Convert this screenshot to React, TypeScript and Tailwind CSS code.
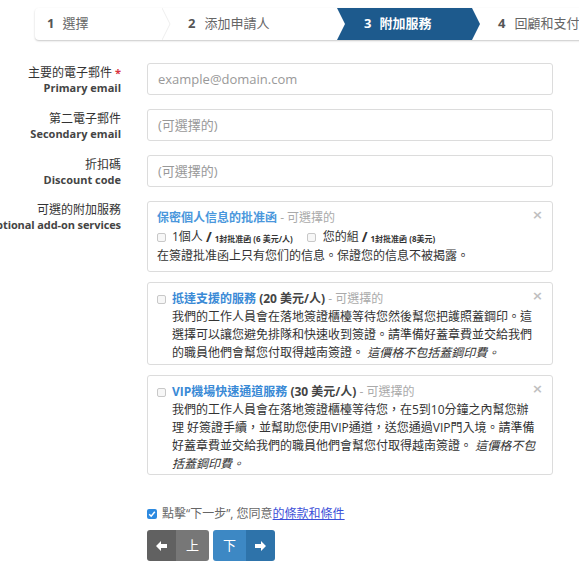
import React from "react";

function Check({ className = "" }: { className?: string }) {
  return (
    <span
      className={
        "inline-block w-[9px] h-[9px] border border-[#c8c8c8] rounded-[2px] bg-[#f7f7f7] shrink-0 " +
        className
      }
    />
  );
}

function Arrow({ dir }: { dir: "left" | "right" }) {
  return (
    <svg width="11" height="10" viewBox="0 0 11 10">
      {dir === "left" ? (
        <polygon points="0,5 5,0 5,3 11,3 11,7 5,7 5,10" fill="#fff" />
      ) : (
        <polygon points="11,5 6,0 6,3 0,3 0,7 6,7 6,10" fill="#fff" />
      )}
    </svg>
  );
}

function Close() {
  return (
    <span className="absolute top-[6px] right-[9px] text-[13px] leading-[14px] font-bold text-[#c0c0c0] font-['DejaVu_Sans',sans-serif]">
      ×
    </span>
  );
}

function Label({ zh, en, req }: { zh: string; en: string; req?: boolean }) {
  return (
    <div className="w-[121px] shrink-0 flex flex-col items-end leading-[15px] pt-[2px]">
      <div className="whitespace-nowrap text-[12px] text-[#333]">
        {zh}
        {req && <span className="text-[#d9333f] font-bold ml-[3px] text-[11px] align-top">*</span>}
      </div>
      <div className="whitespace-nowrap text-[11px] font-bold text-[#444]">{en}</div>
    </div>
  );
}

function Field({ placeholder }: { placeholder: string }) {
  return (
    <input
      readOnly
      placeholder={placeholder}
      className="ml-[26px] w-[406px] h-[32px] border border-[#dcdcdc] rounded-[3px] px-[10px] text-[13px] text-[#333] placeholder:text-[#999] outline-none bg-white"
    />
  );
}

export default function App() {
  return (
    <div className="w-[579px] h-[568px] overflow-hidden bg-white relative text-[#333] font-['Open_Sans','Noto_Sans_CJK_TC',sans-serif]">
      {/* Steps */}
      <div className="pt-[8px] pl-[35px]">
        <div className="h-[32px] w-[560px] flex items-stretch rounded-l-[4px] bg-white shadow-[0_1px_2px_rgba(0,0,0,0.22)] text-[13px]">
          <div className="w-[127px] flex items-center pl-[12px]">
            <span className="font-bold text-[#555]">1</span>
            <span className="ml-[8px] text-[#666]">選擇</span>
          </div>
          <svg width="10" height="32" viewBox="0 0 10 32" className="shrink-0">
            <polyline points="0,0 8,16 0,32" fill="none" stroke="#eeeeee" strokeWidth="1" />
          </svg>
          <div className="w-[165px] flex items-center pl-[16px]">
            <span className="font-bold text-[#555]">2</span>
            <span className="ml-[9px] text-[#666]">添加申請人</span>
          </div>
          <div className="relative w-[143px] flex items-center pl-[27px]">
            <svg width="143" height="32" viewBox="0 0 143 32" className="absolute inset-0">
              <polygon points="0,0 135,0 143,16 135,32 0,32 8,16" fill="#1d5a8d" />
            </svg>
            <span className="relative font-bold text-white">3</span>
            <span className="relative ml-[8px] font-bold text-white">附加服務</span>
          </div>
          <div className="flex items-center pl-[18px]">
            <span className="font-bold text-[#555]">4</span>
            <span className="ml-[9px] text-[#666] whitespace-nowrap">回顧和支付</span>
          </div>
        </div>
      </div>

      {/* Form */}
      <div className="mt-[23px] flex flex-col gap-[14px]">
        <div className="flex">
          <Label zh="主要的電子郵件" en="Primary email" req />
          <Field placeholder="example@domain.com" />
        </div>
        <div className="flex">
          <Label zh="第二電子郵件" en="Secondary email" />
          <Field placeholder="(可選擇的)" />
        </div>
        <div className="flex">
          <Label zh="折扣碼" en="Discount code" />
          <Field placeholder="(可選擇的)" />
        </div>
        <div className="flex">
          <div className="w-[121px] shrink-0 flex flex-col items-end leading-[15px] pt-[1px]">
            <div className="whitespace-nowrap text-[12px] text-[#333]">可選的附加服務</div>
            <div className="whitespace-nowrap text-[11px] font-bold text-[#444] tracking-[-0.1px]">Optional add-on services</div>
          </div>
          <div className="ml-[26px] w-[406px] flex flex-col gap-[10px] text-[12px] leading-[18px]">
            {/* Box 1 */}
            <div className="relative border border-[#dcdcdc] rounded-[3px] pl-[9px] pr-[10px] pt-[7px] pb-[6px]">
              <Close />
              <div className="whitespace-nowrap">
                <span className="font-bold text-[#4a97dc]">保密個人信息的批准函</span>
                <span className="text-[#aaa]"> - 可選擇的</span>
              </div>
              <div className="flex items-center h-[20px] whitespace-nowrap">
                <Check />
                <span className="ml-[6px] text-[12px]">1個人</span>
                <span className="ml-[3px] text-[14px] font-bold">/</span>
                <span className="ml-[3px] text-[8px] font-bold mt-[3px]">1封批准函 (6 美元/人)</span>
                <Check className="ml-[14px]" />
                <span className="ml-[7px] text-[12px]">您的組</span>
                <span className="ml-[3px] text-[14px] font-bold">/</span>
                <span className="ml-[3px] text-[8px] font-bold mt-[3px]">1封批准函 (8美元)</span>
              </div>
              <div className="whitespace-nowrap">在簽證批准函上只有您们的信息。保證您的信息不被揭露。</div>
            </div>

            {/* Box 2 */}
            <div className="relative border border-[#dcdcdc] rounded-[3px] pl-[9px] pr-[10px] pt-[7px] pb-[2px] flex">
              <Close />
              <Check className="mt-[5px]" />
              <div className="ml-[6px] whitespace-nowrap">
                <div>
                  <span className="font-bold text-[#3a8ad6]">抵達支援的服務</span>
                  <span className="font-bold text-[#444]"> (20 美元/人)</span>
                  <span className="text-[#aaa]"> - 可選擇的</span>
                </div>
                <div>我們的工作人員會在落地簽證櫃檯等待您然後幫您把護照蓋鋼印。這</div>
                <div>選擇可以讓您避免排隊和快速收到簽證。請準備好蓋章費並交給我們</div>
                <div>
                  的職員他們會幫您付取得越南簽證。 <i>這價格不包括蓋鋼印費。</i>
                </div>
              </div>
            </div>

            {/* Box 3 */}
            <div className="relative border border-[#dcdcdc] rounded-[3px] pl-[9px] pr-[10px] pt-[7px] pb-[1px] flex">
              <Close />
              <Check className="mt-[5px]" />
              <div className="ml-[6px] whitespace-nowrap">
                <div>
                  <span className="font-bold text-[#3a8ad6]">VIP機場快速通道服務</span>
                  <span className="font-bold text-[#444]"> (30 美元/人)</span>
                  <span className="text-[#aaa]"> - 可選擇的</span>
                </div>
                <div>我們的工作人員會在落地簽證櫃檯等待您，在5到10分鐘之內幫您辦</div>
                <div>理 好簽證手續，並幫助您使用VIP通道，送您通過VIP門入境。請準備</div>
                <div>
                  好蓋章費並交給我們的職員他們會幫您付取得越南簽證。 <i>這價格不包</i>
                </div>
                <div>
                  <i>括蓋鋼印費。</i>
                </div>
              </div>
            </div>
          </div>
        </div>
      </div>

      {/* Agreement */}
      <div className="ml-[147px] mt-[30px] flex items-center h-[18px] text-[12px] whitespace-nowrap">
        <span className="w-[10px] h-[10px] rounded-[2px] bg-[#2d8ae0] flex items-center justify-center">
          <svg width="8" height="8" viewBox="0 0 8 8">
            <polyline points="1.2,4.2 3.2,6.2 6.8,1.8" fill="none" stroke="#fff" strokeWidth="1.5" />
          </svg>
        </span>
        <span className="ml-[5px] text-[#666]">點擊“下一步”, 您同意</span>
        <span className="text-[#3b4fd8] underline">的條款和條件</span>
      </div>

      {/* Buttons */}
      <div className="ml-[147px] mt-[7px] flex gap-[4px]">
        <div className="flex h-[31px] rounded-[3px] overflow-hidden">
          <div className="w-[29px] bg-[#616161] flex items-center justify-center">
            <Arrow dir="left" />
          </div>
          <div className="w-[33px] bg-[#777777] flex items-center justify-center text-white text-[13px]">上</div>
        </div>
        <div className="flex h-[31px] rounded-[3px] overflow-hidden">
          <div className="w-[33px] bg-[#3d88c4] flex items-center justify-center text-white text-[13px]">下</div>
          <div className="w-[29px] bg-[#2e73aa] flex items-center justify-center">
            <Arrow dir="right" />
          </div>
        </div>
      </div>
    </div>
  );
}
